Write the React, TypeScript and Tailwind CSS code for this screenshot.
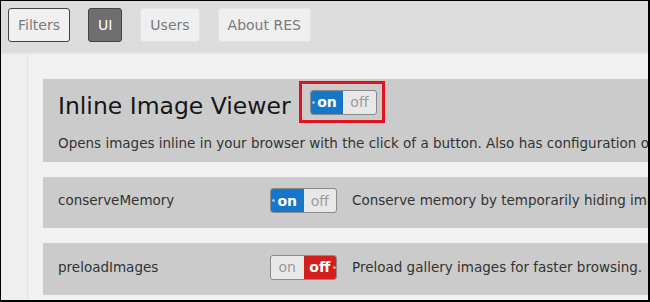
import React from 'react';

interface ToggleProps {
    on: boolean;
}

function Toggle({ on }: ToggleProps) {
    return (
        <div className="flex h-[25px] w-[67px] shrink-0 overflow-hidden rounded-[3px] border border-[#8a8a8a] bg-[#e8e8e8] text-[14px] leading-none">
            <div className={`relative flex w-1/2 items-center justify-center ${on ? 'bg-[#1676c9] font-bold text-white' : 'text-[#9a9a9a]'}`}>
                {on && <span className="absolute left-[1px] top-[10px] h-[3px] w-[3px] rounded-full bg-[#8cc0ee]"></span>}
                on
            </div>
            <div className={`relative flex w-1/2 items-center justify-center ${!on ? 'bg-[#d41f1f] font-bold text-white' : 'text-[#9a9a9a]'}`}>
                off
                {!on && <span className="absolute right-[0px] top-[10px] h-[3px] w-[3px] rounded-full bg-[#f09a9a]"></span>}
            </div>
        </div>
    );
}

const tabs = [
    { label: 'Filters', kind: 'outlined' },
    { label: 'UI', kind: 'active' },
    { label: 'Users', kind: 'plain' },
    { label: 'About RES', kind: 'plain' },
];

export default function App() {
    return (
        <div className="h-[302px] w-[650px] overflow-hidden border-t border-l border-r-2 border-b-2 border-black bg-[#efefef] font-['DejaVu_Sans',sans-serif]">
            {/* Tab bar */}
            <div className="flex h-[53px] items-start gap-[18px] border-b-2 border-[#e3e3e3] bg-[#dcdcdc] pl-[7px] pt-[7px]">
                {tabs.map((t) => (
                    <div
                        key={t.label}
                        className={`flex h-[34px] items-center rounded-[3px] px-[9px] text-[14px] ${
                            t.kind === 'active'
                                ? 'border border-[#444] bg-[#6e6e6e] text-white'
                                : t.kind === 'outlined'
                                ? 'border border-[#444] bg-[#f0f0f0] text-[#7a7a7a]'
                                : 'border border-[#e4e4e4] bg-[#efefef] text-[#7a7a7a]'
                        }`}
                    >
                        {t.label}
                    </div>
                ))}
            </div>

            {/* Content */}
            <div className="ml-[26px] h-full border-l border-[#e4e4e4] bg-[#f1f1f1] pl-[15px] pt-[25px]">
                <div className="flex flex-col gap-[15px]">
                    <div className="h-[83px] bg-[#cbcbcb] pl-[15px] pt-[2px]">
                        <div className="flex items-start">
                            <span className="mt-[10px] whitespace-nowrap text-[23.5px] leading-[30px] text-[#161616]">Inline Image Viewer</span>
                            <div className="ml-[8px] flex h-[42px] items-center border-[3px] border-[#e0141e] pl-[8px] pr-[5px]">
                                <Toggle on={true} />
                            </div>
                        </div>
                        <div className="mt-[10px] whitespace-nowrap text-[13.5px] text-[#333]">
                            Opens images inline in your browser with the click of a button. Also has configuration options
                        </div>
                    </div>

                    <div className="flex h-[51px] items-center bg-[#cbcbcb] pb-[4px] pl-[15px]">
                        <span className="w-[212px] shrink-0 text-[13.5px] text-[#333]">conserveMemory</span>
                        <Toggle on={true} />
                        <span className="ml-[15px] whitespace-nowrap text-[13.5px] text-[#333]">Conserve memory by temporarily hiding images</span>
                    </div>

                    <div className="flex h-[52px] items-center bg-[#cbcbcb] pb-[4px] pl-[15px]">
                        <span className="w-[212px] shrink-0 text-[13.5px] text-[#333]">preloadImages</span>
                        <Toggle on={false} />
                        <span className="ml-[15px] whitespace-nowrap text-[13.5px] text-[#333]">Preload gallery images for faster browsing.</span>
                    </div>
                </div>
            </div>
        </div>
    );
}
